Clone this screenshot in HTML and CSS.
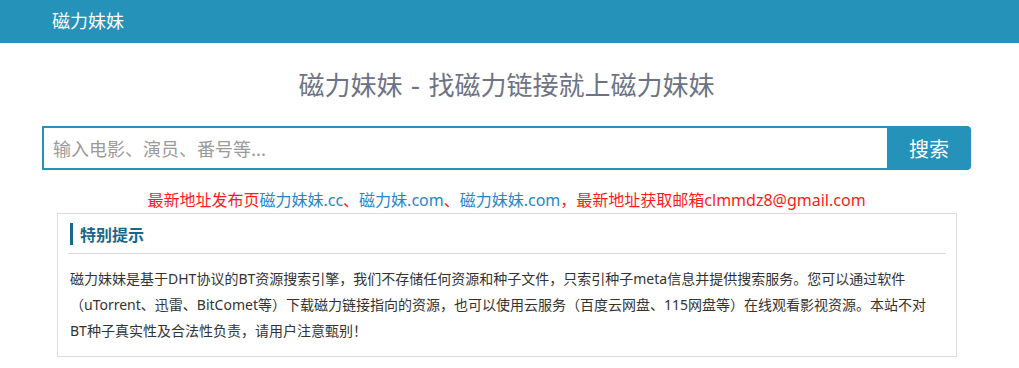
FILE: index.html
```html
<!DOCTYPE html>
<html lang="zh-CN">
<head>
<meta charset="utf-8">
<title>磁力妹妹</title>
<link rel="stylesheet" href="styles.css">
</head>
<body>
<header class="navbar">
  <a class="brand" href="#">磁力妹妹</a>
</header>
<main class="main">
  <h1 class="title">磁力妹妹 - 找磁力链接就上磁力妹妹</h1>
  <form class="search" action="#">
    <input class="search-input" type="text" placeholder="输入电影、演员、番号等...">
    <button class="search-btn" type="submit">搜索</button>
  </form>
  <p class="notice">最新地址发布页<a href="#" class="notice-link">磁力妹妹.cc</a>、<a href="#" class="notice-link">磁力妹.com</a>、<a href="#" class="notice-link">磁力妹妹.com</a>，最新地址获取邮箱clmmdz8@gmail.com</p>
  <section class="panel">
    <div class="panel-head">
      <h2 class="panel-title">特别提示</h2>
    </div>
    <p class="panel-body">磁力妹妹是基于DHT协议的BT资源搜索引擎，我们不存储任何资源和种子文件，只索引种子meta信息并提供搜索服务。您可以通过软件（uTorrent、迅雷、BitComet等）下载磁力链接指向的资源，也可以使用云服务（百度云网盘、115网盘等）在线观看影视资源。本站不对BT种子真实性及合法性负责，请用户注意甄别！</p>
  </section>
</main>
</body>
</html>
```
FILE: styles.css
```css
* { box-sizing: border-box; }
html, body { margin: 0; padding: 0; background: #fff; }
body {
  font-family: "Noto Sans", "Noto Sans CJK SC", sans-serif;
  color: #333;
}
.navbar {
  height: 43px;
  background: #2492b9;
  display: flex;
  align-items: center;
  padding-left: 52px;
}
.brand {
  color: #fff;
  text-decoration: none;
  font-size: 18px;
  line-height: 24px;
  font-family: "Noto Sans CJK SC", sans-serif;
  margin-top: -4px;
}
.main {
  width: 929px;
  margin-left: 42px;
}
.title {
  margin: 26px 0 0;
  text-align: center;
  font-family: "DejaVu Sans", "Noto Sans CJK SC", sans-serif;
  font-size: 26px;
  line-height: 34px;
  font-weight: normal;
  color: #6d7386;
}
.search {
  display: flex;
  margin-top: 23px;
  height: 44px;
}
.search-input {
  flex: 1;
  height: 44px;
  border: 2px solid #2492b9;
  border-right: none;
  border-radius: 0;
  padding: 0 9px;
  font-size: 18px;
  font-family: "Noto Sans CJK SC", sans-serif;
  outline: none;
  color: #333;
}
.search-input::placeholder { color: #9a9a9a; }
.search-btn {
  width: 84px;
  height: 44px;
  border: none;
  background: #2492b9;
  color: #fff;
  font-size: 20px;
  font-family: "Noto Sans CJK SC", sans-serif;
  border-radius: 0 4px 4px 0;
  padding: 0;
}
.notice {
  margin: 18px 0 0;
  text-align: center;
  font-size: 16px;
  line-height: 24px;
  color: #ff1a1a;
}
.notice-link {
  color: #1f87c9;
  text-decoration: none;
}
.panel {
  margin: 1px 14px 0 15px;
  border: 1px solid #dcdcdc;
  padding: 0 0 12px;
}
.panel-head {
  margin: 0 10px;
  padding: 9px 0 8px 2px;
  border-bottom: 1px solid #dcdcdc;
}
.panel-title {
  margin: 0;
  font-size: 16px;
  line-height: 22px;
  font-weight: bold;
  color: #1a668a;
  border-left: 3px solid #156a90;
  padding-left: 7px;
  font-family: "Noto Sans CJK SC", sans-serif;
}
.panel-body {
  margin: 12px 22px 0 12px;
  font-size: 14px;
  line-height: 26px;
  color: #333;
}
```
